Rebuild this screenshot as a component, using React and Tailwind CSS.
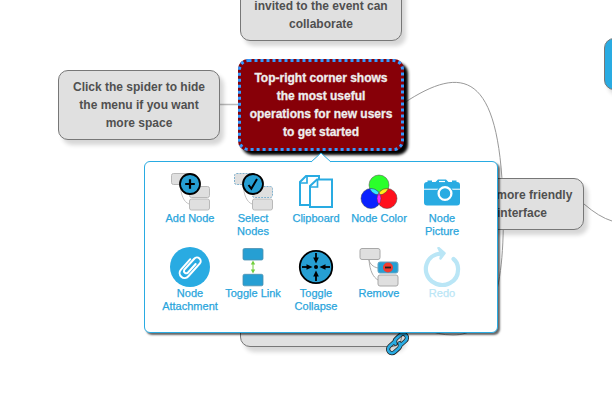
import React from 'react';

const Mini = ({ x, y, fill = '#dfdfdf', stroke = '#b9b9b9', dash }) => (
  <rect x={x} y={y} width="20" height="11" rx="2" fill={fill} stroke={stroke} strokeDasharray={dash} />
);

const Tree = ({ selected, children }) => (
  <svg width="40" height="40" viewBox="0 0 40 40" fill="none">
    <path d="M10 13C11 20 14 22 19 23M10 13C11 25 14 31 19 33" stroke="#c4c4c4" />
    <Mini x={1.5} y={2.5} stroke={selected ? '#7fb0cc' : '#b9b9b9'} dash={selected ? '2 1' : undefined} />
    <Mini x={19.5} y={15.5} stroke={selected ? '#7fb0cc' : '#b9b9b9'} dash={selected ? '2 1' : undefined} />
    <Mini x={19.5} y={28} />
    {children}
  </svg>
);

const AddIcon = () => (
  <Tree>
    <circle cx="20" cy="13" r="10" fill="#269fd3" stroke="#000" strokeWidth="1.8" />
    <path d="M20 8.2V17.8M15.2 13H24.8" stroke="#000" strokeWidth="2.2" />
  </Tree>
);
const SelectIcon = () => (
  <Tree selected>
    <circle cx="20" cy="13" r="10" fill="#269fd3" stroke="#000" strokeWidth="1.8" />
    <path d="M15.5 14L18.3 17.7L24 8" stroke="#000" strokeWidth="2" />
  </Tree>
);
const ClipboardIcon = () => (
  <svg width="40" height="40" viewBox="0 0 40 40" fill="none" stroke="#29abe2" strokeWidth="2">
    <path d="M14 34H4V11L10 5H23V9" />
    <path d="M11 5V12H4" strokeWidth="1.7" />
    <path d="M14 15L21 8.500H36V36H14Z" fill="#fff" />
    <path d="M21.500 9V16H14" strokeWidth="1.700" />
  </svg>
);
const ColorIcon = () => (
  <svg width="40" height="40" viewBox="0 0 40 40">
    <defs>
      <clipPath id="green"><circle cx="20" cy="14" r="10" /></clipPath>
      <clipPath id="blue"><circle cx="12" cy="27.500" r="10" /></clipPath>
    </defs>
    <circle cx="20" cy="14" r="10" fill="#2bff2b" />
    <circle cx="12" cy="27.500" r="10" fill="#0a22ff" />
    <circle cx="28" cy="27.500" r="10" fill="#ff101c" />
    <circle cx="12" cy="27.500" r="10" fill="#36e8ff" clipPath="url(#green)" />
    <circle cx="28" cy="27.500" r="10" fill="#ffee18" clipPath="url(#green)" />
    <circle cx="28" cy="27.500" r="10" fill="#ff20ff" clipPath="url(#blue)" />
    <g fill="none" stroke="#444" strokeWidth=".5">
      <circle cx="20" cy="14" r="10" /><circle cx="12" cy="27.500" r="10" /><circle cx="28" cy="27.500" r="10" />
    </g>
  </svg>
);
const CameraIcon = () => (
  <svg width="40" height="40" viewBox="0 0 40 40" fill="#29abe2">
    <path d="M2 17.800V14Q2 11 5 11H5.500V9.500H10V11H13.500L16 8.500H24L26.500 11H30V9.500H34.500V11H35Q38 11 38 14V17.800Z" />
    <path d="M17 10.500H23" stroke="#fff" strokeWidth="1.200" />
    <path d="M2 19H38V31.500Q38 34.500 35 34.500H5Q2 34.500 2 31.500Z" />
    <path d="M2 18.400H38" stroke="#bce5f6" />
    <circle cx="23" cy="22.500" r="8.500" />
    <circle cx="23" cy="22.500" r="6.400" stroke="#fff" strokeWidth="2.300" />
  </svg>
);
const AttachIcon = () => (
  <svg width="40" height="40" viewBox="0 0 40 40" fill="none">
    <circle cx="20" cy="20" r="20" fill="#29abe2" />
    <path transform="translate(20 20) rotate(42)" d="M-5-6V8A5 5 0 0 0 5 8V-9A3.700 3.700 0 0 0-2.400-9V6A2.400 2.400 0 0 0 2.200 6V-6" stroke="#fff" strokeWidth="2" strokeLinecap="round" />
  </svg>
);
const LinkIcon = () => (
  <svg width="40" height="40" viewBox="0 0 40 40">
    <g fill="#269fd3" stroke="#4d8fae" strokeWidth=".8">
      <rect x="10" y="1.500" width="20" height="11.500" rx="1.500" />
      <rect x="10" y="27.300" width="20" height="11.500" rx="1.500" />
    </g>
    <path d="M20 16V24" stroke="#72cf3f" />
    <path d="M20 13.500L22.200 17.500H17.800ZM20 26.500L22.200 22.500H17.800Z" fill="#72cf3f" />
  </svg>
);
const CollapseIcon = () => (
  <svg width="40" height="40" viewBox="0 0 40 40">
    <circle cx="20" cy="20" r="16.200" fill="#269fd3" stroke="#000" strokeWidth="1.800" />
    <circle cx="20" cy="20" r="2" />
    {[0, 90, 180, 270].map((a) => (
      <g key={a} transform={`rotate(${a} 20 20)`}>
        <path d="M20 6V13" stroke="#000" strokeWidth="1.800" />
        <path d="M17.200 10.500H22.800L20 16.500Z" />
      </g>
    ))}
  </svg>
);
const RemoveIcon = () => (
  <svg width="40" height="40" viewBox="0 0 40 40" fill="none">
    <path d="M10 13C11 17 14 20 19 21M10 13C11 24 14 30 19 33" stroke="#aaa" />
    <Mini x={1} y={1.5} stroke="#a8a8a8" />
    <Mini x={19} y={15} fill="#269fd3" stroke="#69a4c0" />
    <Mini x={19} y={28} stroke="#a8a8a8" />
    <circle cx="29" cy="20.500" r="5" fill="#f23b2e" />
    <path d="M26 20.500H32" stroke="#222" strokeWidth="1.800" />
  </svg>
);
const RedoIcon = () => (
  <svg width="40" height="40" viewBox="0 0 40 40" fill="none">
    <path d="M20 6.500C3 7 -1 26 10 34.500C22 43 37 35 36 21Q35.500 15 31.500 12" stroke="#bae6f6" strokeWidth="4.200" strokeLinecap="round" />
    <path d="M16.500 1L22.500 6.200L18.500 11.500L19.500 7Z" fill="#bae6f6" stroke="#bae6f6" strokeWidth="2.500" strokeLinejoin="round" />
  </svg>
);

const actions = [
  ['Add Node', AddIcon], ['Select Nodes', SelectIcon], ['Clipboard', ClipboardIcon], ['Node Color', ColorIcon], ['Node Picture', CameraIcon],
  ['Node Attachment', AttachIcon], ['Toggle Link', LinkIcon], ['Toggle Collapse', CollapseIcon], ['Remove', RemoveIcon], ['Redo', RedoIcon],
];

const Node = ({ className, children }) => (
  <div className={`absolute flex items-center justify-center rounded-[10px] border border-[#777] bg-[#e0e0e0] text-center text-[12px] leading-[18px] font-bold text-[#505050] shadow-[4px_5px_4px_rgba(0,0,0,0.16)] ${className}`}>
    {children}
  </div>
);

const chain = 'M12 8H5A3.5 3.5 0 0 0 5 15H10Q13 15 13.5 12M12 14H19A3.5 3.5 0 0 0 19 7H14Q11 7 10.5 10';

export default function App() {
  return (
    <main className="relative h-[402px] w-[612px] overflow-hidden bg-white font-['Liberation_Sans',Arial,sans-serif]">
      <svg className="absolute inset-0" width="612" height="402" fill="none" stroke="#999">
        <path d="M220 104.500H240" stroke="#bbb" strokeWidth="1.500" />
        <path d="M404 103C463 64 499 72 503 200C506 302 487 335 453 335C431 335 420 326 402 316" />
        <path d="M584 204Q599 217 612 221" />
      </svg>
      <Node className="top-[-29px] left-[240px] h-[70px] w-[162px]"><p className="pt-[17px]">invited to the event can<br />collaborate</p></Node>
      <Node className="top-[70px] left-[58px] h-[70px] w-[162px]"><p>Click the spider to hide<br />the menu if you want<br />more space</p></Node>
      <Node className="top-[178px] left-[454px] h-[52px] w-[130px]"><p className="pl-[6px] whitespace-nowrap">and more friendly<br />interface</p></Node>
      <Node className="top-[295px] left-[240px] h-[52px] w-[162px]"><p className="pt-[14px]">source</p></Node>
      <div className="absolute top-[38px] left-[604px] h-[52px] w-[100px] rounded-[10px] border border-[#777] bg-[#29abe2] shadow-[4px_5px_4px_rgba(0,0,0,0.16)]" />

      <section className="absolute top-[59px] left-[238px] flex h-[92px] w-[166px] items-center justify-center rounded-[10px] bg-[#870008] text-center text-[12px] leading-[18px] font-bold text-[#eee] shadow-[4px_4px_3px_#000] [-webkit-text-stroke:0.3px_#eee]">
        <svg className="absolute inset-0" width="166" height="92" fill="none">
          <rect x="1.500" y="1.500" width="163" height="89" rx="9" stroke="#3399ff" strokeWidth="3" strokeDasharray="3 3" />
        </svg>
        <p className="pb-px">Top-right corner shows<br />the most useful<br />operations for new users<br />to get started</p>
      </section>

      <svg className="absolute top-[331px] left-[384px]" width="27" height="25" viewBox="0 0 24 22" fill="none">
        <g transform="rotate(-42 12 11)" strokeLinecap="round">
          <path d={chain} stroke="#222" strokeWidth="3.800" />
          <path d={chain} stroke="#29abe2" strokeWidth="2.400" />
        </g>
      </svg>

      <section className="absolute top-[161px] left-[144px] h-[172px] w-[354px] rounded-[6px] border border-[#29abe2] bg-white px-[13px] pt-[9px] shadow-[2px_2px_2px_rgba(0,0,0,0.6)]">
        <svg className="absolute top-[-10px] left-[165px]" width="22" height="12" fill="none">
          <path d="M1 10L11 1L21 10V12H1Z" fill="#fff" />
          <path d="M1 10L11 1L21 10" stroke="#29abe2" />
        </svg>
        <div className="grid w-[315px] grid-cols-5">
          {actions.map(([label, Icon], i) => (
            <button key={label} className={`flex h-[76px] flex-col items-center text-[11px] leading-[13px] [-webkit-text-stroke:0.25px_currentColor] ${label === 'Redo' ? 'text-[#bae6f6]' : 'text-[#29a5dc]'}`}>
              <Icon />
              <span className={`w-[59px] pl-px ${i < 5 ? 'pt-px' : ''}`}>{label}</span>
            </button>
          ))}
        </div>
      </section>
    </main>
  );
}
